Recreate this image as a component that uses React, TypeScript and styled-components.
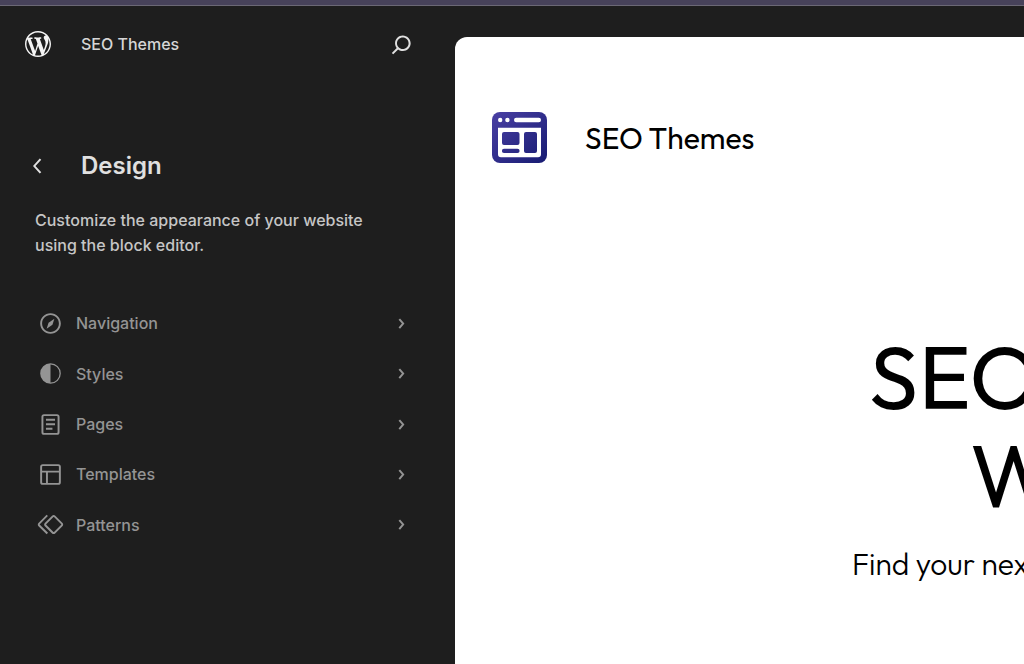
import React from "react";
import styled, { createGlobalStyle } from "styled-components";

const GlobalStyle = createGlobalStyle`
  *, *::before, *::after { box-sizing: border-box; }
  html, body, #root { height: 100%; }
  body {
    margin: 0;
    background: #1e1e1e;
    font-family: Inter, "Liberation Sans", sans-serif;
    font-weight: 450;
    overflow: hidden;
  }
  h1, h2, p, ul { margin: 0; padding: 0; }
`;

const Shell = styled.div`
  display: flex;
  flex-direction: column;
  min-height: 100vh;
  height: 100%;
`;

const WindowEdge = styled.div`
  flex: none;
  height: 6px;
  background: #47425a;
  border-bottom: 1px solid #6b6875;
`;

const Workspace = styled.div`
  flex: 1;
  display: flex;
  min-height: 0;
`;

const Sidebar = styled.aside`
  flex: 0 0 455px;
  color: #e0e0e0;
`;

const SiteHub = styled.header`
  display: flex;
  align-items: center;
  height: 76px;
  padding: 0 38px 0 25px;
`;

const HubTitle = styled.a`
  flex: 1;
  margin-left: 30px;
  color: #d6d6d6;
  font-size: 16px;
  line-height: 24px;
  text-decoration: none;
`;

const HubLink = styled.a`
  display: flex;
  color: #f4f4f4;
`;

const IconButton = styled.button`
  display: flex;
  padding: 0;
  border: 0;
  background: none;
  color: #e0e0e0;
  cursor: pointer;
`;

const ScreenHeading = styled.div`
  display: flex;
  align-items: center;
  gap: 28px;
  margin-top: 68px;
  padding-left: 23px;
`;

const ScreenTitle = styled.h1`
  font-size: 24px;
  font-weight: 600;
  line-height: 32px;
`;

const Description = styled.p`
  margin-top: 26px;
  padding: 0 76px 0 35px;
  color: #c6c6c6;
  font-size: 16px;
  line-height: 25px;
`;

const MenuList = styled.ul`
  display: flex;
  flex-direction: column;
  min-height: 252px;
  margin-top: 40px;
  padding: 0 38px 0 35px;
  list-style: none;
`;

const MenuItem = styled.li`
  flex: 1;
  display: flex;
`;

const MenuLink = styled.a`
  flex: 1;
  display: flex;
  align-items: center;
  gap: 10px;
  color: #949494;
  font-size: 16px;
  text-decoration: none;
`;

const MenuLabel = styled.span`
  flex: 1;
`;

const Canvas = styled.main`
  flex: 1;
  min-width: 0;
  margin-top: 31px;
  border-top-left-radius: 12px;
  background: #fff;
  color: #000;
  font-family: Outfit, Lato, sans-serif;
  font-weight: 400;
  overflow: hidden;
`;

const SiteHeader = styled.div`
  display: flex;
  align-items: center;
  gap: 38px;
  padding: 75px 0 0 37px;
`;

const SiteName = styled.p`
  font-size: 30px;
  line-height: 40px;
`;

const Hero = styled.section`
  margin-top: 164px;
  white-space: nowrap;
`;

const HeroTitle = styled.h2`
  padding-left: 414px;
  font-size: 89px;
  font-weight: 400;
  line-height: 99px;
`;

const HeroLine = styled.span<{ $indent?: number }>`
  display: block;
  padding-left: ${(p) => p.$indent ?? 0}px;
`;

const HeroText = styled.p`
  margin-top: 19px;
  padding-left: 397px;
  font-size: 30px;
  font-weight: 300;
  line-height: 40px;
`;

const Icon = ({ paths, size = 31 }: { paths: string[]; size?: number }) => (
  <svg width={size} height={size} viewBox="0 0 24 24" fill="currentColor" fillRule="evenodd" aria-hidden="true">
    {paths.map((d) => (
      <path key={d} d={d} />
    ))}
  </svg>
);

const WordPressLogo = () => (
  <svg width="26" height="26" viewBox="0 0 20 20" fill="currentColor" aria-hidden="true">
    <path d="M20 10c0-5.51-4.49-10-10-10C4.48 0 0 4.49 0 10c0 5.52 4.48 10 10 10 5.51 0 10-4.48 10-10zM7.78 15.37L4.37 6.22c.55-.02 1.17-.08 1.17-.08.5-.06.44-1.13-.06-1.11 0 0-1.45.11-2.37.11-.18 0-.37 0-.58-.01C4.12 2.69 6.87 1.11 10 1.11c2.33 0 4.45.87 6.05 2.34-.68-.11-1.65.39-1.65 1.58 0 .74.45 1.36.9 2.1.35.61.55 1.36.55 2.46 0 1.49-1.4 5-1.4 5l-3.03-8.37c.54-.02.82-.17.82-.17.5-.05.44-1.25-.06-1.22 0 0-1.44.12-2.38.12-.87 0-2.33-.12-2.33-.12-.5-.03-.56 1.2-.06 1.22l.92.08 1.26 3.41zM17.41 10c.24-.64.74-1.87.43-4.25.7 1.29 1.05 2.71 1.05 4.25 0 3.29-1.73 6.24-4.4 7.78.97-2.59 1.94-5.2 2.92-7.78zM6.1 18.09C3.12 16.65 1.11 13.53 1.11 10c0-1.3.23-2.48.72-3.59C3.25 10.3 4.67 14.2 6.1 18.09zm4.03-6.63l2.58 6.98c-.86.29-1.76.45-2.71.45-.79 0-1.57-.11-2.29-.33.81-2.38 1.62-4.74 2.42-7.1z" />
  </svg>
);

const SiteLogo = () => (
  <svg width="55" height="51" viewBox="0 0 55 51" aria-hidden="true">
    <defs>
      <linearGradient id="logo-fill" x1="0" y1="0" x2="1" y2="1">
        <stop offset="0" stopColor="#4a40a4" />
        <stop offset="1" stopColor="#171b72" />
      </linearGradient>
    </defs>
    <rect width="55" height="51" rx="8" fill="url(#logo-fill)" />
    <g fill="#fff">
      <circle cx="8.2" cy="8" r="2.2" />
      <circle cx="15.4" cy="8" r="2.2" />
      <rect x="22" y="5.8" width="27" height="4.4" rx="2.2" />
      <path
        fillRule="evenodd"
        d="M6 15.8h43v26.4a3 3 0 0 1-3 3H9a3 3 0 0 1-3-3zM12 20a2 2 0 0 0-2 2v9a2 2 0 0 0 2 2h13.5a2 2 0 0 0 2-2v-9a2 2 0 0 0-2-2zM34 20a2 2 0 0 0-2 2v17a2 2 0 0 0 2 2h9a2 2 0 0 0 2-2V22a2 2 0 0 0-2-2zM12 36.8a2.1 2.1 0 0 0 0 4.2h13.5a2.1 2.1 0 0 0 0-4.2z"
      />
    </g>
  </svg>
);

const chevronRight = [
  "M10.8622 8.04053L14.2805 12.0286L10.8622 16.0167L9.72327 15.0405L12.3049 12.0286L9.72327 9.01672L10.8622 8.04053Z",
];
const chevronLeft = ["M14.6 7l-1.2-1L8 12l5.4 6 1.2-1-4.6-5z"];
const search = [
  "M13 5c-3.3 0-6 2.7-6 6 0 1.4.5 2.7 1.3 3.7l-3.8 3.8 1.1 1.1 3.8-3.8c1 .8 2.3 1.3 3.7 1.3 3.3 0 6-2.7 6-6S16.3 5 13 5zm0 10.5c-2.5 0-4.5-2-4.5-4.5s2-4.5 4.5-4.5 4.5 2 4.5 4.5-2 4.5-4.5 4.5z",
];

const menu = [
  {
    label: "Navigation",
    paths: [
      "M12 4c-4.4 0-8 3.6-8 8s3.6 8 8 8 8-3.6 8-8-3.6-8-8-8zm0 14.5c-3.6 0-6.5-2.9-6.5-6.5S8.4 5.5 12 5.5s6.5 2.9 6.5 6.5-2.9 6.5-6.5 6.5zM9 16l4.5-3L15 8.4l-4.5 3L9 16z",
    ],
  },
  {
    label: "Styles",
    paths: ["M20 12a8 8 0 1 1-16 0 8 8 0 0 1 16 0Zm-1 0a7 7 0 0 1-7 7v-14a7 7 0 0 1 7 7Z"],
  },
  {
    label: "Pages",
    paths: [
      "M15.5 7.5h-7V9h7V7.5Zm-7 3.5h7v1.5h-7V11Zm5 3.5h-5V16h5v-1.5Z",
      "M17 4H7a2 2 0 0 0-2 2v12a2 2 0 0 0 2 2h10a2 2 0 0 0 2-2V6a2 2 0 0 0-2-2ZM7 5.5h10a.5.5 0 0 1 .5.5v12a.5.5 0 0 1-.5.5H7a.5.5 0 0 1-.5-.5V6a.5.5 0 0 1 .5-.5Z",
    ],
  },
  {
    label: "Templates",
    paths: [
      "M18 5.5H6a.5.5 0 00-.5.5v3h13V6a.5.5 0 00-.5-.5zm.5 5H10v8h8a.5.5 0 00.5-.5v-7.5zm-10 0h-3V18a.5.5 0 00.5.5h2.5v-8zM6 4h12a2 2 0 012 2v12a2 2 0 01-2 2H6a2 2 0 01-2-2V6a2 2 0 012-2z",
    ],
  },
  {
    label: "Patterns",
    paths: [
      "M21.3 10.8l-5.6-5.6c-.7-.7-1.8-.7-2.5 0l-5.6 5.6c-.7.7-.7 1.8 0 2.5l5.6 5.6c.3.3.8.5 1.2.5s.9-.2 1.2-.5l5.6-5.6c.8-.7.8-1.9.1-2.5zm-1 1.4l-5.6 5.6c-.1.1-.3.1-.4 0l-5.6-5.6c-.1-.1-.1-.3 0-.4l5.6-5.6s.1-.1.2-.1.1 0 .2.1l5.6 5.6c.1.1.1.3 0 .4zm-16.6-.4L10 5.5l-1-1-6.3 6.3c-.7.7-.7 1.8 0 2.5L9 19.5l1.1-1.1-6.3-6.3c-.2 0-.2-.2-.1-.3z",
    ],
  },
];

export default function App() {
  return (
    <Shell>
      <GlobalStyle />
      <WindowEdge />
      <Workspace>
        <Sidebar>
          <SiteHub>
            <HubLink href="#dashboard" aria-label="Dashboard">
              <WordPressLogo />
            </HubLink>
            <HubTitle href="#site">SEO Themes</HubTitle>
            <IconButton type="button" aria-label="Search">
              <Icon paths={search} />
            </IconButton>
          </SiteHub>
          <ScreenHeading>
            <IconButton type="button" aria-label="Back">
              <Icon paths={chevronLeft} size={30} />
            </IconButton>
            <ScreenTitle>Design</ScreenTitle>
          </ScreenHeading>
          <Description>Customize the appearance of your website using the block editor.</Description>
          <nav aria-label="Design">
            <MenuList>
              {menu.map((item) => (
                <MenuItem key={item.label}>
                  <MenuLink href={`#${item.label.toLowerCase()}`}>
                    <Icon paths={item.paths} />
                    <MenuLabel>{item.label}</MenuLabel>
                    <Icon paths={chevronRight} />
                  </MenuLink>
                </MenuItem>
              ))}
            </MenuList>
          </nav>
        </Sidebar>
        <Canvas>
          <SiteHeader>
            <SiteLogo />
            <SiteName>SEO Themes</SiteName>
          </SiteHeader>
          <Hero>
            <HeroTitle>
              <HeroLine>SEO</HeroLine>
              <HeroLine $indent={101}>W</HeroLine>
            </HeroTitle>
            <HeroText>Find your nex</HeroText>
          </Hero>
        </Canvas>
      </Workspace>
    </Shell>
  );
}
